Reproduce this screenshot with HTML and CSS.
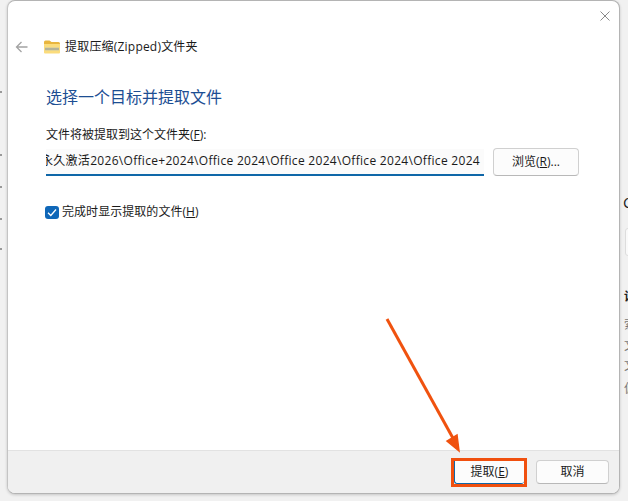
FILE: index.html
```html
<!DOCTYPE html>
<html lang="zh-CN">
<head>
<meta charset="utf-8">
<title>提取压缩(Zipped)文件夹</title>
<link rel="stylesheet" href="styles.css">
</head>
<body>
<div class="backdrop-left">
  <i class="speck s1"></i><i class="speck s2"></i><i class="speck s3"></i><i class="speck s4"></i><i class="speck s5"></i>
</div>
<main class="dialog">
  <div class="content">
    <div class="closebar">
      <svg class="close" width="10" height="10" viewBox="0 0 10 10"><path d="M.5.5l9 9M9.500.5l-9 9" stroke="#8a8a8a" stroke-width="1" fill="none"/></svg>
    </div>
    <header class="titlebar">
      <svg class="back" width="13" height="12" viewBox="0 0 13 12"><path d="M12.500 6H1.500M6.500 1L1.500 6l5 5" stroke="#a3a3a3" stroke-width="1.300" fill="none"/></svg>
      <svg class="folder" width="16" height="14" viewBox="0 0 16 14">
        <path d="M0 2a1.500 1.500 0 0 1 1.500-1.500h4L7.500 2H14.500A1.500 1.500 0 0 1 16 3.500V5H0z" fill="#e8b53e"/>
        <path d="M0 4h16v8.500a1 1 0 0 1-1 1H1a1 1 0 0 1-1-1z" fill="#fbdc7c"/>
        <path d="M1 7.500h14v3H1z" fill="#c9c7a8"/>
        <path d="M1.500 9h13" stroke="#77766a" stroke-width="1" stroke-dasharray="1 1" fill="none"/>
      </svg>
      <span class="title">提取压缩(Zipped)文件夹</span>
    </header>
    <h1 class="heading">选择一个目标并提取文件</h1>
    <label class="field-label">文件将被提取到这个文件夹(<u>F</u>):</label>
    <div class="path-row">
      <div class="path-input"><span class="path-text">永久激活2026\Office+2024\Office 2024\Office 2024\Office 2024\Office 2024</span></div>
      <button class="btn browse">浏览(<u>R</u>)...</button>
    </div>
    <div class="check-row">
      <span class="checkbox"><svg width="10" height="9" viewBox="0 0 10 9"><path d="M1 4.800l2.800 2.700L9 1.500" stroke="#fff" stroke-width="1.300" fill="none"/></svg></span>
      <span class="check-label">完成时显示提取的文件(<u>H</u>)</span>
    </div>
  </div>
  <footer class="footer">
    <span class="highlight"><button class="btn primary">提取(<u>E</u>)</button></span>
    <button class="btn cancel">取消</button>
  </footer>
</main>
<div class="backdrop-right">
  <span class="peek big">C</span>
  <span class="peek-box"></span>
  <span class="peek bold">设</span>
  <span class="peek">索</span>
  <span class="peek">文</span>
  <span class="peek">文</span>
  <span class="peek">偏</span>
</div>
<svg class="arrow" width="628" height="501" viewBox="0 0 628 501">
  <path d="M387 319L454 440" stroke="#f0520f" stroke-width="3" fill="none"/>
  <path d="M459 451L447 441L457 435z" fill="#f0520f" stroke="#f0520f" stroke-width="1.500"/>
</svg>
</body>
</html>
```
FILE: styles.css
```css
html, body {
  margin: 0;
  padding: 0;
  width: 628px;
  height: 501px;
  overflow: hidden;
  background: #f1f1f1;
  font-family: "Open Sans", "Noto Sans CJK SC", sans-serif;
  color: #1a1a1a;
}
* { box-sizing: border-box; }
body { position: relative; }
u { text-underline-offset: 1px; }

.dialog {
  margin-left: 7px;
  width: 613px;
  height: 494px;
  background: #fff;
  border: 1px solid #b4b4b4;
  border-left-color: #c4c4c4;
  border-radius: 8px;
  box-shadow: 0 1px 3px rgba(0, 0, 0, .18);
  display: flex;
  flex-direction: column;
  overflow: hidden;
  position: relative;
}
.content {
  flex: 1;
  padding: 0 0 0 38px;
  display: flex;
  flex-direction: column;
}
.closebar {
  height: 9px;
  position: relative;
}
.close {
  position: absolute;
  right: 9px;
  top: 10px;
}
.titlebar {
  margin: 29px 0 0 -30px;
  height: 16px;
  display: flex;
  align-items: center;
}
.back { margin-left: -1px; margin-right: 16px; }
.folder { margin-right: 5px; }
.title { font-size: 12px; line-height: 16px; letter-spacing: .2px; }
.heading {
  margin: 31px 0 0;
  font-size: 16px;
  line-height: 23px;
  font-weight: 400;
  color: #1c4e93;
}
.field-label {
  margin-top: 18px;
  font-size: 12px;
  line-height: 16px;
}
.path-row {
  margin-top: 6px;
  display: flex;
  align-items: flex-start;
  gap: 9px;
}
.path-input {
  width: 438px;
  height: 27px;
  background: #fbfbfb;
  border-bottom: 2px solid #0f67a8;
  display: flex;
  justify-content: flex-end;
  align-items: center;
  overflow: hidden;
  padding: 0 4px 2px 0;
}
.path-text {
  flex: none;
  white-space: nowrap;
  font-size: 12px;
  line-height: 16px;
  letter-spacing: .3px;
  color: #1a1a1a;
}
.btn {
  font-family: inherit;
  font-size: 12px;
  line-height: 16px;
  color: #1a1a1a;
  background: #fcfcfc;
  border: 1px solid #d0d0d0;
  border-bottom-color: #b8b8b8;
  border-radius: 4px;
  padding: 0;
}
.browse {
  width: 86px;
  height: 28px;
  margin-top: -1px;
}
.check-row {
  margin-top: 28px;
  display: flex;
  align-items: center;
  height: 16px;
}
.checkbox {
  width: 14px;
  height: 13px;
  border-radius: 3px;
  background: #0f67b8;
  display: flex;
  align-items: center;
  justify-content: center;
  margin-right: 3px;
  margin-left: -1px;
}
.check-label { font-size: 12px; line-height: 16px; letter-spacing: .05px; }
.footer {
  height: 43px;
  background: #f0f0f0;
  border-top: 1px solid #e2e2e2;
  display: flex;
  justify-content: flex-end;
  align-items: center;
  gap: 9px;
  padding: 0 10px 0 0;
}
.highlight {
  display: flex;
  width: 76px;
  height: 29px;
  border: 3px solid #f0500f;
  margin-top: 1px;
  background: #fff;
}
.primary {
  width: 100%;
  height: 100%;
  border: 0;
  border-bottom: 1px solid #0f67a8;
  border-left: 1px solid #0f67a8;
  border-radius: 0 0 3px 3px;
  background: #fcfcfc;
}
.cancel {
  width: 73px;
  height: 24px;
}

.backdrop-right {
  position: absolute;
  left: 621px;
  top: 0;
  width: 7px;
  height: 501px;
  overflow: hidden;
}
.peek {
  position: absolute;
  left: 3px;
  font-size: 12px;
  line-height: 16px;
  color: #777;
  white-space: nowrap;
}
.big { top: 192px; left: 2px; font-size: 15px; line-height: 20px; color: #222; }
.peek-box {
  position: absolute;
  left: 4px;
  top: 228px;
  width: 20px;
  height: 28px;
  border: 1px solid #ddd;
  border-radius: 3px;
  background: #fafafa;
}
.bold { top: 289px; font-weight: 700; color: #222; }
.peek:nth-child(4) { top: 317px; }
.peek:nth-child(5) { top: 338px; }
.peek:nth-child(6) { top: 358px; }
.peek:nth-child(7) { top: 381px; }

.backdrop-left {
  position: absolute;
  left: 0;
  top: 0;
  width: 3px;
  height: 501px;
}
.speck {
  position: absolute;
  left: 0;
  width: 2px;
  height: 2px;
  background: #999;
}
.s1 { top: 91px; }
.s2 { top: 154px; }
.s3 { top: 186px; }
.s4 { top: 218px; }
.s5 { top: 248px; }

.arrow {
  position: absolute;
  left: 0;
  top: 0;
  pointer-events: none;
}
```
